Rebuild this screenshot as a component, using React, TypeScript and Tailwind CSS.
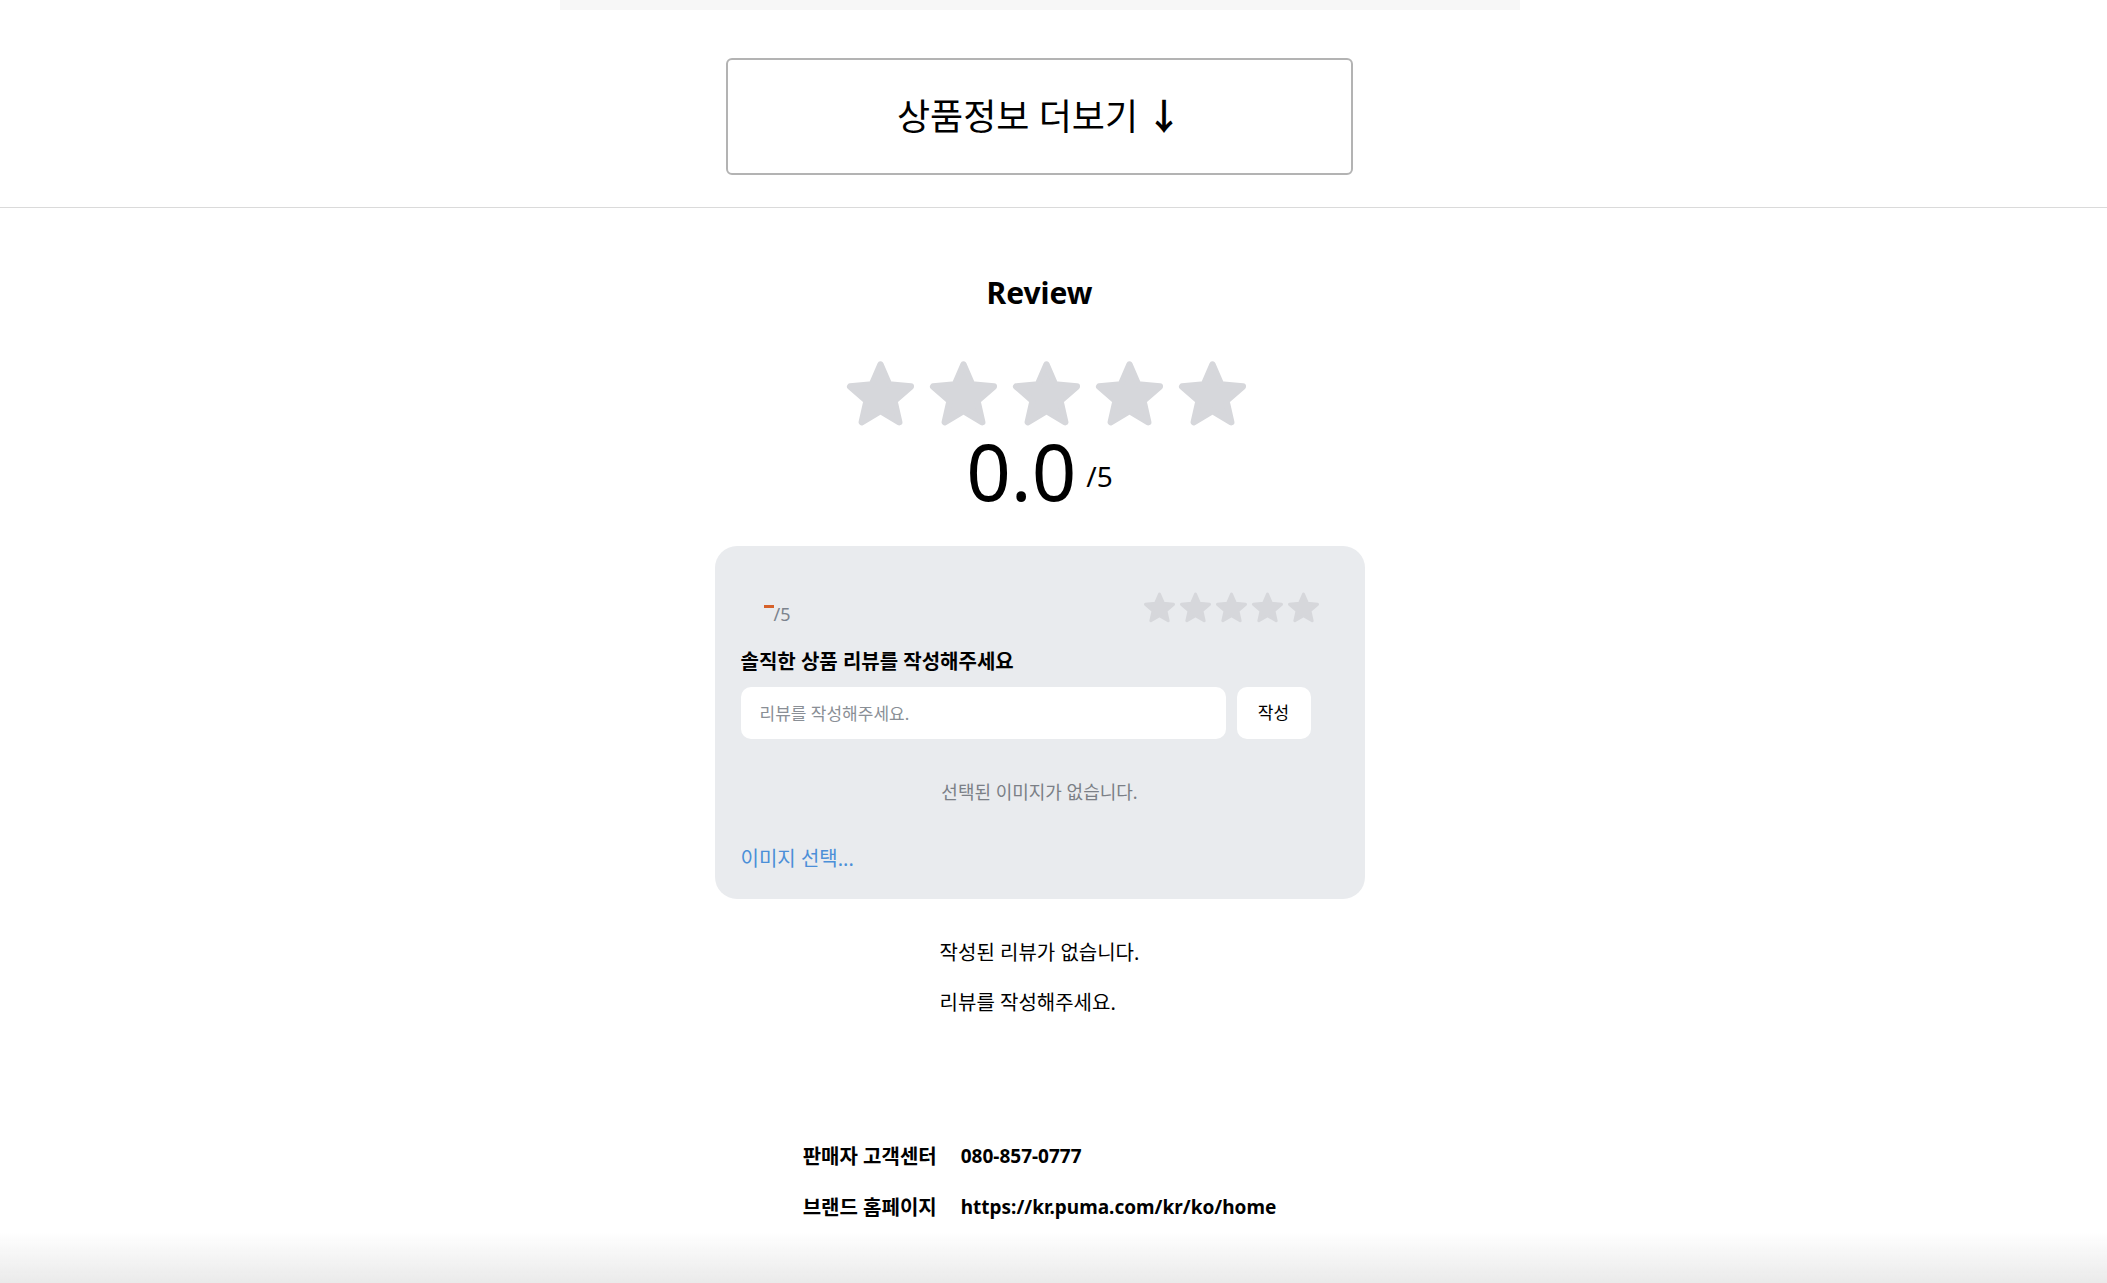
import { useState } from "react";

const STAR =
  "M12 2.8 L14.7 9.08 L21.51 9.71 L16.37 14.22 L17.88 20.89 L12 17.4 L6.12 20.89 L7.63 14.22 L2.49 9.71 L9.3 9.08 Z";

function Star({ size }: { size: number }) {
  return (
    <svg
      width={size}
      height={size}
      viewBox="1.5 1.6 21 20.6"
      className="shrink-0 overflow-visible"
    >
      <path
        d={STAR}
        fill="#d6d7db"
        stroke="#d6d7db"
        strokeWidth={2}
        strokeLinejoin="round"
      />
    </svg>
  );
}

export default function App() {
  const [review, setReview] = useState<string>("");

  return (
    <div className="relative min-h-screen bg-white font-['Noto_Sans','Noto_Sans_CJK_KR',sans-serif] text-black">
      <div className="pr-[28px]">
        <div className="mx-auto h-[10px] w-[960px] bg-[#f7f7f7]" />
        <div className="flex justify-center pt-[48px] pb-[32px]">
          <button className="flex h-[117px] w-[627px] items-center justify-center gap-2 rounded-md border-2 border-[#b3b3b3] bg-white text-[36px] leading-none">
            <span>상품정보 더보기</span>
            <span className="font-bold">↓</span>
          </button>
        </div>
      </div>

      <div className="h-px w-full bg-[#dadada]" />

      <div className="flex flex-col items-center pr-[28px]">
        <h2 className="mt-[67px] text-[30px] leading-[36px] font-bold">
          Review
        </h2>

        <div className="mt-[49px] flex gap-[16px] pl-[14px]">
          {[0, 1, 2, 3, 4].map((i) => (
            <Star key={i} size={67} />
          ))}
        </div>

        <div className="mt-[5px] flex items-center gap-[10px]">
          <span className="text-[78px] leading-none">0.0</span>
          <span className="mt-[10px] text-[28px] leading-none">/5</span>
        </div>

        <section className="mt-[36px] w-[650px] rounded-[22px] bg-[#e9ebee] px-[26px] pt-[46px] pb-[27px]">
          <div className="flex h-[31px] w-[578px] items-end justify-between">
            <div className="flex items-start pl-[23px]">
              <div className="h-[3px] w-[10px] bg-[#d6612a]" />
              <span className="text-[18px] leading-[18px] text-[#7c838d]">
                /5
              </span>
            </div>
            <div className="flex gap-[5px]">
              {[0, 1, 2, 3, 4].map((i) => (
                <Star key={i} size={31} />
              ))}
            </div>
          </div>

          <p className="mt-[25px] text-[20px] leading-[27px] font-bold">
            솔직한 상품 리뷰를 작성해주세요
          </p>

          <div className="mt-[12px] flex w-[570px] gap-[11px]">
            <input
              value={review}
              onChange={(e) => setReview(e.target.value)}
              placeholder="리뷰를 작성해주세요."
              className="h-[52px] flex-1 rounded-[10px] bg-white px-[19px] text-[17px] outline-none placeholder:text-[#8a8f96]"
            />
            <button className="h-[52px] w-[74px] rounded-[10px] bg-white text-[17px]">
              작성
            </button>
          </div>

          <p className="mt-[40px] text-center text-[18px] leading-[27px] text-[#7b7f86]">
            선택된 이미지가 없습니다.
          </p>

          <p className="mt-[39px] text-[20px] leading-[27px] text-[#4b8fd8]">
            이미지 선택...
          </p>
        </section>

        <div className="mt-[40px] flex flex-col gap-[23px] text-[20px] leading-[27px]">
          <p>작성된 리뷰가 없습니다.</p>
          <p>리뷰를 작성해주세요.</p>
        </div>

        <div className="mt-[127px] mb-[80px] grid grid-cols-[auto_auto] items-center gap-x-[24px] gap-y-[24px] leading-[27px] font-bold">
          <span className="text-[20px]">판매자 고객센터</span>
          <span className="text-[19px]">080-857-0777</span>
          <span className="text-[20px]">브랜드 홈페이지</span>
          <span className="text-[19px]">https://kr.puma.com/kr/ko/home</span>
        </div>
      </div>

      <div className="pointer-events-none fixed inset-x-0 bottom-0 h-[52px] bg-linear-to-b from-white/0 to-[#eaeaea]" />
    </div>
  );
}
